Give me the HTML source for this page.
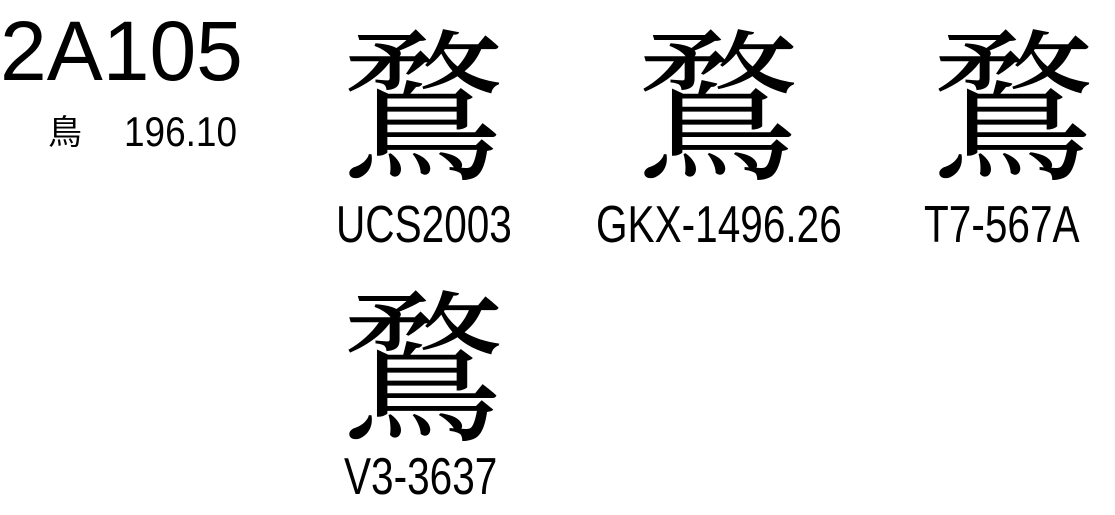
<!DOCTYPE html>
<html><head><meta charset="utf-8">
<style>
html,body{margin:0;padding:0;background:#fff;width:1115px;height:515px;overflow:hidden;position:relative}
.t{position:absolute;font-family:"Liberation Sans",sans-serif;color:#000;white-space:nowrap;line-height:1;transform-origin:left top}
.g{position:absolute;font-family:"Noto Serif CJK SC","Noto Serif CJK TC",serif;font-size:165px;line-height:1;color:#000}
.l{position:absolute;font-family:"Liberation Sans",sans-serif;font-size:52px;line-height:1;color:#000;white-space:nowrap;transform-origin:left top;transform:scaleX(0.78)}
</style></head><body>
<div class="t" style="left:0;top:9px;font-size:84px">2A105</div>
<div class="t" style="left:48px;top:113px;font-family:'Noto Sans CJK SC',sans-serif;font-size:34px">鳥</div>
<div class="t" style="left:124px;top:111px;font-size:42px;transform:scaleX(0.88)">196.10</div>
<div class="g" style="left:340px;top:14px">鶩</div>
<div class="g" style="left:635px;top:14px">鶩</div>
<div class="g" style="left:930px;top:14px">鶩</div>
<div class="l" style="left:336px;top:199px">UCS2003</div>
<div class="l" style="left:596px;top:199px">GKX-1496.26</div>
<div class="l" style="left:924px;top:199px">T7-567A</div>
<div class="g" style="left:340px;top:275px">鶩</div>
<div class="l" style="left:344px;top:451px">V3-3637</div>
</body></html>
